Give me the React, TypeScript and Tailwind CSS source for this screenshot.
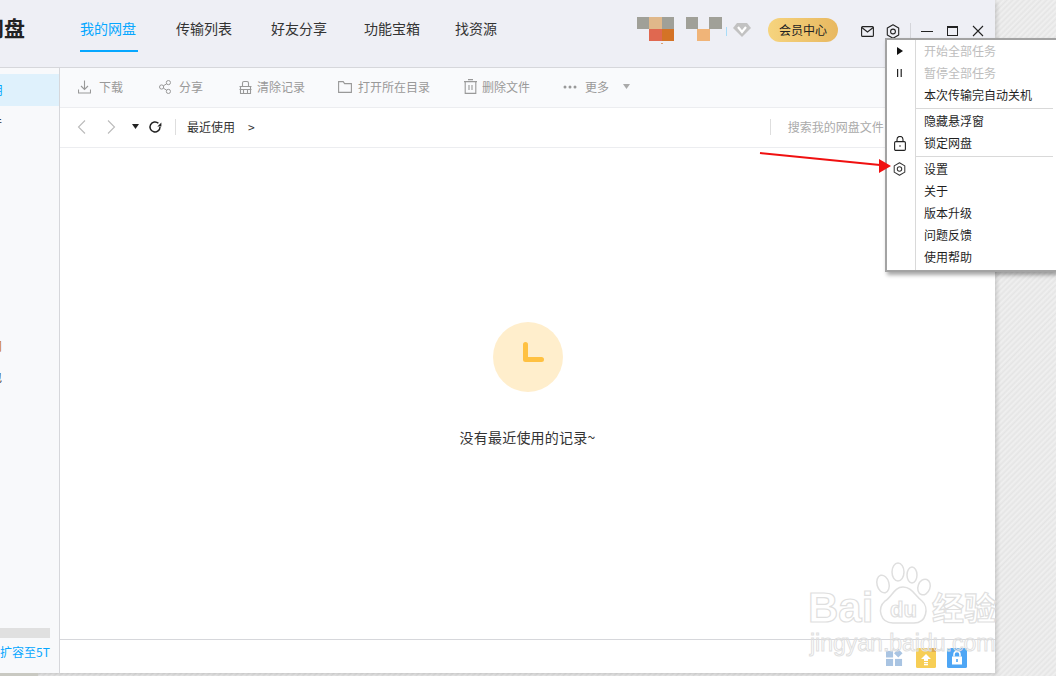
import React from "react";

const FONT = "[font-family:'Noto_Sans_CJK_SC','Noto_Sans',sans-serif]";

const Gear = ({ c = "#222", s = 14 }: { c?: string; s?: number }) => (
  <svg width={s} height={s + 1} viewBox="0 0 14 15" fill="none" stroke={c} strokeWidth="1.1">
    <path d="M7 .8l5.7 3.3v6.8L7 14.2l-5.7-3.3V4.1z" strokeLinejoin="round" />
    <circle cx="7" cy="7.5" r="2.4" />
  </svg>
);

const Lock = () => (
  <svg width="12" height="15" viewBox="0 0 12 15" fill="none" stroke="#222" strokeWidth="1.1">
    <rect x="0.6" y="5.6" width="10.8" height="8.8" rx="1.2" />
    <path d="M3 5.5V3.4a3 3 0 016 0v2.1" />
    <circle cx="6" cy="10" r=".8" fill="#222" stroke="none" />
  </svg>
);

const tools: { gap: number; after: number; label: string; icon: React.ReactNode }[] = [
  {
    label: "下载", gap: 8, after: 36,
    icon: (
      <svg width="13" height="14" viewBox="0 0 13 14" fill="none" stroke="#999" strokeWidth="1.1">
        <path d="M6.5 .5v8.5M3 6l3.5 3.5L10 6M.5 9.5v3.5h12V9.5" />
      </svg>
    ),
  },
  {
    label: "分享", gap: 8, after: 36,
    icon: (
      <svg width="12" height="14" viewBox="0 0 12 14" fill="none" stroke="#999" strokeWidth="1">
        <circle cx="2.6" cy="7" r="2.1" /><circle cx="9.4" cy="2.6" r="2.1" /><circle cx="9.4" cy="11.4" r="2.1" />
        <path d="M4.4 5.8l3.2-2M4.4 8.2l3.2 2" />
      </svg>
    ),
  },
  {
    label: "清除记录", gap: 5, after: 33,
    icon: (
      <svg width="13" height="14" viewBox="0 0 13 14" fill="none" stroke="#999" strokeWidth="1.1">
        <path d="M.5 6.5h12M1.5 6.5v7h10v-7M3.5 6.5V3a1.5 1.5 0 011.5-1.5h3A1.5 1.5 0 019.5 3v3.5M.5 9.5h12M4.5 9.5v4M8.5 9.5v4" />
      </svg>
    ),
  },
  {
    label: "打开所在目录", gap: 6, after: 34,
    icon: (
      <svg width="14" height="12" viewBox="0 0 14 12" fill="none" stroke="#999" strokeWidth="1.1">
        <path d="M.6.6h4.6l1.4 2h6.8v8.8H.6z" />
      </svg>
    ),
  },
  {
    label: "删除文件", gap: 5, after: 33,
    icon: (
      <svg width="13" height="15" viewBox="0 0 13 15" fill="none" stroke="#999" strokeWidth="1.1">
        <path d="M0 2.6h13M4 .6h5M1.2 2.6v11.8h10.6V2.6M5 6v5M8 6v5" />
      </svg>
    ),
  },
  {
    label: "更多", gap: 8, after: 14,
    icon: (
      <svg width="14" height="4" viewBox="0 0 14 4" fill="#999">
        <circle cx="2" cy="2" r="1.5" /><circle cx="7" cy="2" r="1.5" /><circle cx="12" cy="2" r="1.5" />
      </svg>
    ),
  },
];

const Sep = () => <div className="mb-[1px] ml-[29px] mr-[3px] mt-[2px] h-px bg-[#d9d9d9]" />;

const MenuRow = ({ label, off, icon }: { label: string; off?: boolean; icon?: React.ReactNode }) => (
  <div className="flex h-[22px] items-center">
    <div className="flex w-[29px] shrink-0 items-center justify-center pr-[4px]">{icon}</div>
    <span className={`pl-[8px] text-[12px] ${off ? "text-[#bdbdbd]" : "text-[#1f1f1f]"}`}>{label}</span>
  </div>
);

export default function App() {
  return (
    <div className={`relative h-[676px] w-[1056px] overflow-hidden bg-[#ebebeb] bg-[repeating-linear-gradient(135deg,#e4e4e4_0px,#f0f0f0_2px,#e6e6e6_4px)] ${FONT}`}>
      <div className="flex h-[673px] w-[995px] flex-col bg-white shadow-[2px_2px_4px_rgba(0,0,0,0.15)]">
        {/* header */}
        <header className="flex h-[68px] shrink-0 border-b border-[#d6d7db] bg-[#eeeff5]">
          <div className="ml-[-17px] mt-[12px] w-[97px] shrink-0">
            <span className="text-[21px] font-bold leading-[30px] text-[#222]">网盘</span>
          </div>
          <nav className="flex h-[52px] pt-[17px] text-[14px] leading-[22px] text-[#333]">
            <div className="mr-[38px] h-[35px] w-[58px] border-b-2 border-[#06a7ff] text-[#06a7ff]">我的网盘</div>
            <div className="mr-[39px]">传输列表</div>
            <div className="mr-[37px]">好友分享</div>
            <div className="mr-[35px]">功能宝箱</div>
            <div>找资源</div>
          </nav>
          <div className="ml-[140px] mt-[17px] flex h-[30px] items-start">
            <svg width="114" height="30" viewBox="0 0 114 30">
              <rect x="0" y="0" width="12" height="12" fill="#a0a098" />
              <rect x="12" y="0" width="13" height="12" fill="#e0b88a" />
              <rect x="25" y="0" width="12" height="12" fill="#a0a098" />
              <rect x="12" y="12" width="13" height="12" fill="#e06850" />
              <rect x="25" y="12" width="12" height="12" fill="#d47326" />
              <rect x="24" y="26" width="2" height="1" fill="#e0a070" />
              <rect x="49" y="0" width="12" height="12" fill="#a0a098" />
              <rect x="72" y="0" width="13" height="12" fill="#a0a098" />
              <rect x="60" y="12" width="13" height="12" fill="#f0b478" />
              <rect x="89" y="10" width="1" height="9" fill="#a8dcf8" />
              <path d="M100 6h10l4 5-9 9-9-9z" fill="#c2c2c2" />
              <path d="M101 10l4 5 4-5" fill="none" stroke="#fff" strokeWidth="2.2" />
            </svg>
            <div className="ml-[17px] mt-[1px] flex h-[24px] w-[70px] items-center justify-center rounded-full bg-gradient-to-r from-[#f6d47e] to-[#e8b860] text-[12px] text-[#222]">
              会员中心
            </div>
          </div>
          <div className="ml-[23px] mt-[24px] flex h-[14px] items-center">
            <svg width="13" height="11" viewBox="0 0 13 11" fill="none" stroke="#222" strokeWidth="1.1">
              <rect x=".6" y=".6" width="11.8" height="9.8" rx="1" />
              <path d="M.8 1.5L6.5 6l5.7-4.5" />
            </svg>
            <div className="ml-[12px]"><Gear /></div>
            <div className="ml-[10px] h-[16px] w-px bg-[#d4d5da]" />
            <div className="ml-[10px] h-px w-[12px] bg-[#222]" />
            <div className="ml-[14px] h-[10px] w-[11px] border border-t-2 border-[#222]" />
            <svg className="ml-[14px]" width="12" height="12" viewBox="0 0 12 12" stroke="#222" strokeWidth="1.1">
              <path d="M1 1l10 10M11 1L1 11" />
            </svg>
          </div>
        </header>

        <div className="flex min-h-0 flex-1">
          {/* sidebar */}
          <aside className="flex w-[60px] shrink-0 flex-col overflow-hidden border-r border-[#d6d7db] bg-[#f8f9fb]">
            <div className="mt-[6px] flex h-[32px] items-center bg-[#dff1fc] pl-px">
              <span className="ml-[-46px] text-[12px] text-[#06a7ff]">最近使用</span>
            </div>
            <div className="flex h-[32px] items-center">
              <span className="ml-[-46px] text-[12px] text-[#333]">全部文件</span>
            </div>
            <div className="mt-[192px] flex h-[32px] items-center">
              <span className="ml-[-46px] text-[12px] text-[#c77a1e]">隐藏空间</span>
            </div>
            <div className="flex h-[30px] items-center">
              <span className="ml-[-46px] text-[12px] text-[#333]">我的卡包</span>
            </div>
            <div className="mt-auto h-[10px] w-[50px] bg-[#e0e0e0]" />
            <div className="mb-[11px] mt-[4px] h-[20px] whitespace-nowrap text-[12px] leading-[20px] text-[#06a7ff]">
              扩容至5T
            </div>
          </aside>

          <main className="flex min-w-0 flex-1 flex-col">
            {/* toolbar */}
            <div className="flex h-[40px] shrink-0 items-center border-b border-[#ecedf0] bg-[#f9fafc] pb-[2px] pl-[18px] text-[12px] text-[#999]">
              {tools.map((t) => (
                <div key={t.label} className="flex items-center" style={{ marginRight: t.after }}>
                  <div style={{ marginRight: t.gap }}>{t.icon}</div>
                  <span>{t.label}</span>
                </div>
              ))}
              <svg width="7" height="5" viewBox="0 0 7 5" fill="#aaa"><path d="M0 0h7L3.5 5z" /></svg>
            </div>
            {/* breadcrumb */}
            <div className="flex h-[40px] shrink-0 items-center border-b border-[#ecedf0] pb-[2px] pl-[17px] text-[12px]">
              <svg width="9" height="14" viewBox="0 0 9 14" fill="none" stroke="#bbb" strokeWidth="1.1"><path d="M8 .5L1.5 7 8 13.5" /></svg>
              <svg className="ml-[21px]" width="9" height="14" viewBox="0 0 9 14" fill="none" stroke="#bbb" strokeWidth="1.1"><path d="M1 .5L7.5 7 1 13.5" /></svg>
              <svg className="ml-[16px]" width="7" height="5" viewBox="0 0 7 5" fill="#222"><path d="M0 0h7L3.5 5z" /></svg>
              <svg className="ml-[9px]" width="14" height="14" viewBox="0 0 14 14" fill="none" stroke="#222" strokeWidth="1.5">
                <path d="M12 7a5 5 0 11-1.6-3.7" />
                <path d="M13.4 2.4v4H9.4z" fill="#222" stroke="none" />
              </svg>
              <div className="ml-[13px] h-[16px] w-px bg-[#dedede]" />
              <span className="ml-[11px] text-[#333]">最近使用</span>
              <span className="ml-[13px] text-[#333]">&gt;</span>
              <div className="ml-[515px] h-[16px] w-px bg-[#dedede]" />
              <span className="ml-[17px] text-[#aaa]">搜索我的网盘文件</span>
            </div>
            {/* empty state */}
            <div className="flex min-h-0 flex-1 flex-col items-center pt-[174px]">
              <div className="h-[70px] w-[70px] rounded-full bg-[#ffeecc]">
                <svg width="70" height="70" viewBox="0 0 70 70" fill="none" stroke="#ffc142" strokeWidth="5" strokeLinecap="round" strokeLinejoin="round">
                  <path d="M32.5 22.5v15h16" />
                </svg>
              </div>
              <p className="mt-[35px] text-[14px] leading-[20px] tracking-[0.2px] text-[#333]">没有最近使用的记录~</p>
            </div>
            {/* footer */}
            <div className="flex h-[34px] shrink-0 items-end justify-end border-t border-[#d6d7db] pb-[5px] pr-[28px]">
              <svg className="mb-[2px]" width="17" height="17" viewBox="0 0 18 18" fill="#a9c4e2">
                <rect x="0" y="2" width="7.5" height="7" />
                <path d="M13 0l4.5 4.5L13 9 8.5 4.5z" />
                <rect x="0" y="10.5" width="7.5" height="7.5" />
                <rect x="9.5" y="10.5" width="7.5" height="7.5" />
              </svg>
              <svg className="ml-[13px]" width="20" height="20" viewBox="0 0 20 20">
                <rect width="20" height="20" rx="1.5" fill="#f7ce55" />
                <path d="M10 0h10v4H13z" fill="#e0ac50" />
                <path d="M10 6l5 5h-3v2H8v-2H5z" fill="#fff" />
                <rect x="8" y="14" width="4" height="1.3" fill="#fff" /><rect x="8" y="16" width="4" height="1.3" fill="#fff" />
              </svg>
              <svg className="ml-[11px]" width="20" height="20" viewBox="0 0 20 20">
                <rect width="20" height="20" rx="1.5" fill="#4ea6f5" />
                <rect x="5" y="8.5" width="10" height="8" fill="#fff" />
                <path d="M7 8.5V6.5a3 3 0 016 0v2" fill="none" stroke="#fff" strokeWidth="1.5" />
                <rect x="9.2" y="11" width="1.6" height="3" fill="#4ea6f5" />
              </svg>
            </div>
          </main>
        </div>
      </div>

      {/* bottom strip of the desktop behind */}
      <div className="absolute bottom-0 left-0 h-[3px] w-[38px] bg-[#c9c9c2]" />

      {/* watermark */}
      <div className="pointer-events-none absolute left-[808px] top-[562px] h-[96px] w-[192px] text-transparent [-webkit-text-stroke:1.2px_#dfdfdf]">
        <span className="absolute left-0 top-[22px] font-['Liberation_Sans',sans-serif] text-[42px] font-bold leading-[48px]">Bai</span>
        <svg className="absolute left-[66px] top-0" width="60" height="64" viewBox="0 0 60 64" fill="#fff" stroke="#dfdfdf" strokeWidth="1.5">
          <ellipse cx="9" cy="22" rx="6" ry="9" transform="rotate(-15 9 22)" />
          <ellipse cx="24" cy="10" rx="6" ry="9" />
          <ellipse cx="38" cy="13" rx="5" ry="8" />
          <ellipse cx="50" cy="25" rx="6" ry="8" transform="rotate(20 50 25)" />
          <path d="M29 25c9 0 12 9 19 14 7 6 5 22-8 22H19C6 61 3 46 11 39c7-4 9-14 18-14z" />
        </svg>
        <span className="absolute left-[82px] top-[35px] font-['Liberation_Sans',sans-serif] text-[22px] font-bold leading-[26px]">du</span>
        <span className="absolute left-[124px] top-[24px] text-[32px] font-bold leading-[40px]">经验</span>
        <span className="absolute left-[2px] top-[68px] whitespace-nowrap font-['Liberation_Sans',sans-serif] text-[23px] leading-[26px] [-webkit-text-stroke-width:1px]">jingyan.baidu.com</span>
      </div>

      {/* context menu */}
      <div className="absolute left-[885px] top-[38px] h-[234px] w-[171px] border-2 border-r-0 border-[#a3a3a3] bg-white shadow-[2px_3px_4px_rgba(0,0,0,0.35)]">
        <div className="absolute bottom-0 left-[28px] top-0 w-px bg-[#d9d9d9]" />
        <MenuRow label="开始全部任务" off icon={<svg width="6" height="8" viewBox="0 0 6 8" fill="#111"><path d="M0 0l6 4-6 4z" /></svg>} />
        <MenuRow label="暂停全部任务" off icon={<svg width="5" height="8" viewBox="0 0 5 8" fill="#222"><rect width="1.2" height="8" /><rect x="3.6" width="1.2" height="8" /></svg>} />
        <MenuRow label="本次传输完自动关机" />
        <Sep />
        <MenuRow label="隐藏悬浮窗" />
        <MenuRow label="锁定网盘" icon={<Lock />} />
        <Sep />
        <MenuRow label="设置" icon={<Gear c="#333" s={13} />} />
        <MenuRow label="关于" />
        <MenuRow label="版本升级" />
        <MenuRow label="问题反馈" />
        <MenuRow label="使用帮助" />
      </div>

      {/* red annotation arrow */}
      <svg className="absolute left-[755px] top-[148px]" width="140" height="32" viewBox="0 0 140 32">
        <path d="M5 5L125 17" stroke="#f01010" strokeWidth="2" />
        <path d="M124 11l12 7-12 7z" fill="#f01010" />
      </svg>
    </div>
  );
}
